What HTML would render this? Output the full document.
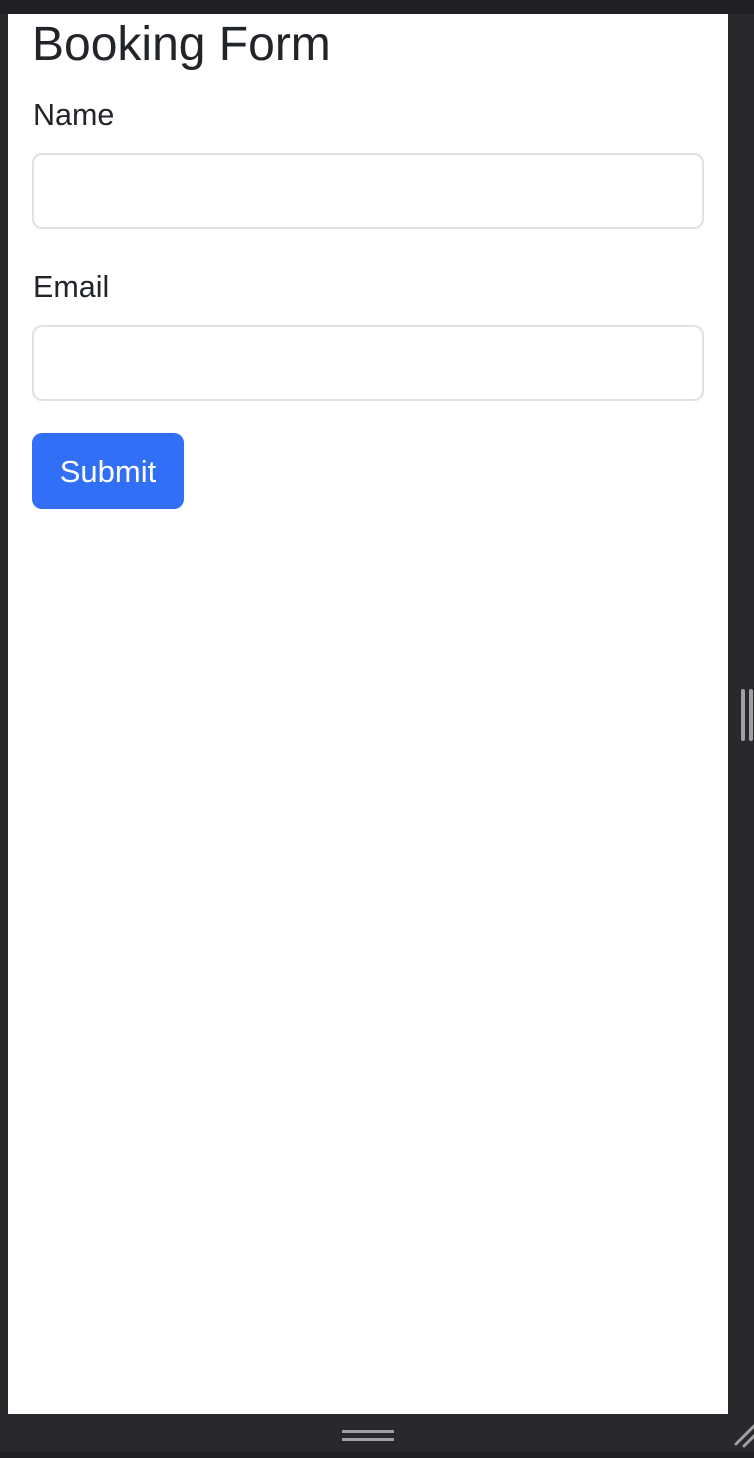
<!DOCTYPE html>
<html><head><style>
body{margin:0;width:754px;height:1458px;background:#28292d;position:relative;overflow:hidden;font-family:"Liberation Sans",sans-serif;color:#212529}
.top{position:absolute;left:0;top:0;width:754px;height:14px;background:#202124}
.page{position:absolute;left:8px;top:14px;width:720px;height:1400px;background:#fff}
.a{position:absolute;white-space:nowrap}
.in{position:absolute;left:32px;width:668px;height:72px;border:2px solid #dee2e6;border-radius:10px;background:#fff}
.btn{position:absolute;left:32px;top:433px;width:152px;height:76px;background:#316ff6;border-radius:10px;color:#fff;font-size:31px;line-height:78px;text-align:center}
.bot{position:absolute;left:0;top:1452px;width:754px;height:6px;background:#202124}
</style></head><body>
<div class="top"></div>
<div class="page"></div>
<div class="a" style="left:32px;top:17px;font-size:48px;line-height:56px">Booking Form</div>
<div class="a" style="left:33px;top:97px;font-size:30.5px;line-height:36px">Name</div>
<div class="in" style="top:153px"></div>
<div class="a" style="left:33px;top:269px;font-size:30.5px;line-height:36px">Email</div>
<div class="in" style="top:325px"></div>
<div class="btn">Submit</div>
<div class="a" style="left:342px;top:1430px;width:52px;height:3px;background:#a0a0a0"></div>
<div class="a" style="left:342px;top:1438px;width:52px;height:3px;background:#a0a0a0"></div>
<div class="a" style="left:741px;top:689px;width:4px;height:52px;background:#a0a0a0;border-radius:2px"></div>
<div class="a" style="left:749px;top:689px;width:4px;height:52px;background:#a0a0a0;border-radius:2px"></div>
<svg class="a" style="left:730px;top:1420px" width="24" height="28"><path d="M6 24L24 6M14 26L24 16" stroke="#a0a0a0" stroke-width="3" stroke-linecap="round"/></svg>
<div class="bot"></div>
</body></html>
